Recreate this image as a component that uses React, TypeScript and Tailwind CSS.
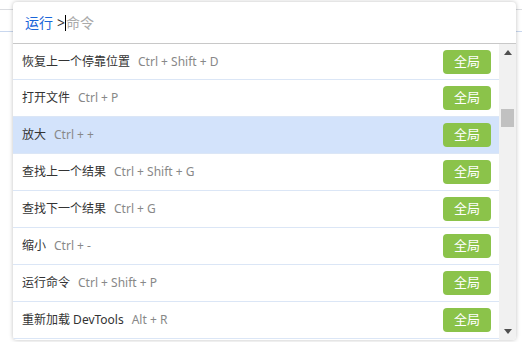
interface Command {
  name: string;
  shortcut: string;
  selected?: boolean;
}

const commands: Command[] = [
  { name: '恢复上一个停靠位置', shortcut: 'Ctrl + Shift + D' },
  { name: '打开文件', shortcut: 'Ctrl + P' },
  { name: '放大', shortcut: 'Ctrl + +', selected: true },
  { name: '查找上一个结果', shortcut: 'Ctrl + Shift + G' },
  { name: '查找下一个结果', shortcut: 'Ctrl + G' },
  { name: '缩小', shortcut: 'Ctrl + -' },
  { name: '运行命令', shortcut: 'Ctrl + Shift + P' },
  { name: '重新加载 DevTools', shortcut: 'Alt + R' },
];

const font = 'font-["Noto_Sans","Noto_Sans_CJK_SC",sans-serif]';

export default function App() {
  return (
    <div className={`relative w-[522px] h-[342px] overflow-hidden bg-white ${font}`}>
      {/* page behind the palette */}
      <div className="h-[10px] border-b border-[#dadce0]" />
      <div className="h-[22px] border-b border-[#c9d7ee]" />

      <div className="absolute left-[13px] top-[2px] w-[503px] h-[338px] flex flex-col bg-white rounded-[4px] shadow-[0_0_4px_rgba(0,0,0,0.25)] overflow-hidden">
        <div className="h-[42px] shrink-0 flex items-center px-[12px] border-b border-[#c8c8c8] text-[14px]">
          <span className="text-[#1a66d9]">运行</span>
          <span className="ml-[4px] text-[#333]">&gt;</span>
          <span className="w-px h-[16px] bg-black" />
          <span className="text-[#aaa]">命令</span>
        </div>

        <div className="flex flex-1 min-h-0">
          <div className="flex-1 flex flex-col">
            {commands.map((c, i) => (
              <div
                key={c.name}
                className={`${i === 0 ? 'h-[36px]' : 'h-[37px]'} shrink-0 flex items-center pl-[9px] pr-[8px] border-b border-[#dbe6f6] text-[12px] ${c.selected ? 'bg-[#d3e3fb]' : ''}`}
              >
                <span className="text-[#333]">{c.name}</span>
                <span className="ml-[8px] text-[#888]">{c.shortcut}</span>
                <span className="ml-auto w-[48px] h-[24px] flex items-center justify-center rounded-[4px] bg-[#8bc34a] text-white text-[13px]">
                  全局
                </span>
              </div>
            ))}
          </div>

          <div className="w-[17px] shrink-0 flex flex-col items-center bg-[#f1f1f1]">
            <div className="h-[17px] flex items-center justify-center">
              <svg width="8" height="5" viewBox="0 0 8 5"><path d="M0 5 L4 0 L8 5 Z" fill="#505050" /></svg>
            </div>
            <div className="mt-[48px] w-[13px] h-[18px] bg-[#c1c1c1]" />
            <div className="mt-auto h-[17px] flex items-center justify-center">
              <svg width="8" height="5" viewBox="0 0 8 5"><path d="M0 0 L8 0 L4 5 Z" fill="#505050" /></svg>
            </div>
          </div>
        </div>
      </div>
    </div>
  );
}
